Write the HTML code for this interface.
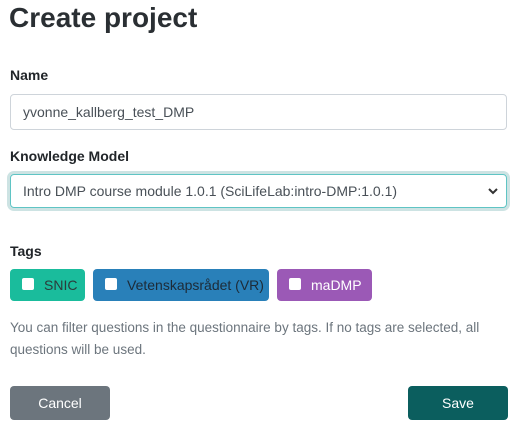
<!DOCTYPE html>
<html><head><style>
body{margin:0;width:521px;height:436px;background:#fff;font-family:"Liberation Sans",sans-serif;color:#212529;position:relative;overflow:hidden}
.a{position:absolute}
h1{position:absolute;left:9px;top:2px;margin:0;font-size:28px;font-weight:bold;color:#2a2f33}
.lbl{font-size:14px;font-weight:bold}
.inp{border:1px solid #ced4da;border-radius:4px;box-sizing:border-box;font-size:14px;color:#495057;padding-left:12px;display:flex;align-items:center}
.tag{height:32px;border-radius:4px;color:#fff;font-size:14px;display:flex;align-items:center;box-sizing:border-box;padding-left:12px;top:269px}
.cb{width:12px;height:12px;background:#fff;border-radius:2px;margin-right:10px;margin-top:-3px}
.btn{top:386px;height:34px;width:100px;border-radius:4px;color:#fff;font-size:14px;display:flex;align-items:center;justify-content:center}
</style></head><body>
<h1>Create project</h1>
<div class="a lbl" style="left:10px;top:67px">Name</div>
<div class="a inp" style="left:10px;top:94px;width:497px;height:36px">yvonne_kallberg_test_DMP</div>
<div class="a lbl" style="left:10px;top:148px">Knowledge Model</div>
<div class="a inp" style="left:10px;top:174px;width:497px;height:34px;border-color:#5fc4c4;box-shadow:0 0 0 3px #cde3e3">Intro DMP course module 1.0.1 (SciLifeLab:intro-DMP:1.0.1)
<svg class="a" style="right:8px;top:12px" width="10" height="8" viewBox="0 0 10 8"><path d="M1 2l4 4 4-4" stroke="#333" stroke-width="2" fill="none"/></svg></div>
<div class="a lbl" style="left:10px;top:243px">Tags</div>
<div class="a tag" style="left:10px;width:75px;background:#1abc9c;color:#2b3b3b"><span class="cb"></span>SNIC</div>
<div class="a tag" style="left:93px;width:176px;background:#2980b9;color:#1d2b38"><span class="cb"></span>Vetenskapsrådet (VR)</div>
<div class="a tag" style="left:277px;width:95px;background:#9b59b6"><span class="cb"></span>maDMP</div>
<div class="a" style="left:10px;top:317px;width:500px;font-size:13.5px;line-height:22px;color:#6c757d">You can filter questions in the questionnaire by tags. If no tags are selected, all questions will be used.</div>
<div class="a btn" style="left:10px;background:#6c757d">Cancel</div>
<div class="a btn" style="left:408px;background:#0b5e5e">Save</div>
</body></html>
